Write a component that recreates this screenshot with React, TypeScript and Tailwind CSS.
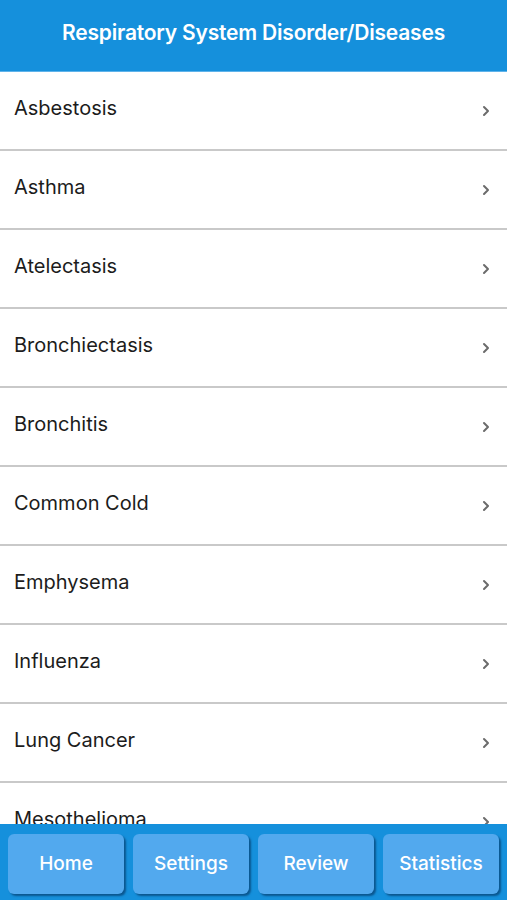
import React from 'react';

const DISEASES = [
  'Asbestosis',
  'Asthma',
  'Atelectasis',
  'Bronchiectasis',
  'Bronchitis',
  'Common Cold',
  'Emphysema',
  'Influenza',
  'Lung Cancer',
  'Mesothelioma',
];

const TABS = ['Home', 'Settings', 'Review', 'Statistics'];

function Chevron() {
  return (
    <svg width="8" height="12" viewBox="0 0 8 12" className="flex-shrink-0">
      <path d="M2 2l4 4-4 4" fill="none" stroke="#6b6b6b" strokeWidth="2" strokeLinecap="round" strokeLinejoin="round" />
    </svg>
  );
}

export default function App() {
  return (
    <div
      className="h-[900px] w-full flex flex-col bg-white overflow-hidden"
      style={{ fontFamily: 'Inter, "Liberation Sans", sans-serif' }}
    >
      {/* Header */}
      <header className="h-[72px] flex-shrink-0 bg-[#1590dc] border-b border-[#5fb3ea] flex items-center justify-center pb-[6px]">
        <h1 className="text-white text-[21px] font-semibold tracking-[-0.2px]">
          Respiratory System Disorder/Diseases
        </h1>
      </header>

      {/* List */}
      <ul className="flex-1 overflow-hidden">
        {DISEASES.map((name) => (
          <li
            key={name}
            className="h-[79px] flex items-center justify-between pl-[14px] pr-[17px] border-b-2 border-[#c9c9c9]"
          >
            <span className="text-[20px] text-[#1c1c1c] pb-[6px]">{name}</span>
            <Chevron />
          </li>
        ))}
      </ul>

      {/* Bottom tab bar */}
      <nav className="h-[76px] flex-shrink-0 bg-[#1590dc] grid grid-cols-4 gap-[9px] px-[8px] pt-[10px] pb-[6px]">
        {TABS.map((tab) => (
          <button
            key={tab}
            className="rounded-[6px] bg-[#52a9ee] text-white text-[19px] font-medium shadow-[2px_2px_2px_rgba(0,40,80,0.55)]"
          >
            {tab}
          </button>
        ))}
      </nav>
    </div>
  );
}
